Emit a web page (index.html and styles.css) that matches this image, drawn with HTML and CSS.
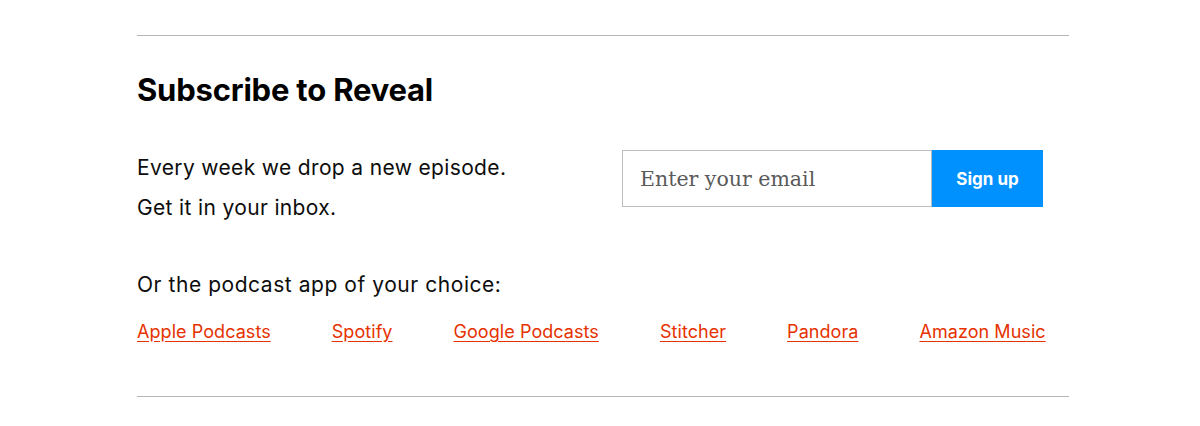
FILE: index.html
```html
<!DOCTYPE html>
<html lang="en">
<head>
  <meta charset="UTF-8">
  <title>Subscribe to Reveal</title>
  <link rel="stylesheet" href="styles.css">
</head>
<body>

  <section class="subscribe">
    <h2 class="subscribe-title">Subscribe to Reveal</h2>

    <div class="subscribe-row">
      <p class="subscribe-text">Every week we drop a new episode.<br>Get it in your inbox.</p>
      <form class="signup" onsubmit="return false">
        <input class="signup-input" type="email" placeholder="Enter your email">
        <button class="signup-btn" type="submit">Sign up</button>
      </form>
    </div>

    <p class="apps-label">Or the podcast app of your choice:</p>
    <div class="apps">
      <a href="#">Apple Podcasts</a>
      <a href="#">Spotify</a>
      <a href="#">Google Podcasts</a>
      <a href="#">Stitcher</a>
      <a href="#">Pandora</a>
      <a href="#">Amazon Music</a>
    </div>
  </section>

</body>
</html>
```

FILE: styles.css
```css
body { margin: 0; background: #fff; font-family: "Inter", "Liberation Sans", sans-serif; color: #0d0d0d; }

.subscribe {
  width: 932px;
  margin: 35px 0 0 137px;
  border-top: 1px solid #b5b5b5;
  border-bottom: 1px solid #b5b5b5;
  height: 362px;
  box-sizing: border-box;
}
.subscribe-title {
  margin: 34px 0 0;
  font-size: 31px;
  line-height: 40px;
  font-weight: 700;
  letter-spacing: -0.2px;
  color: #000;
}

.subscribe-row {
  display: flex;
  margin-top: 40px;
}
.subscribe-text {
  margin: -2px 0 0;
  width: 485px;
  font-size: 21px;
  line-height: 40px;
  letter-spacing: 0.35px;
}

.signup { display: flex; margin: 0; }
.signup-input {
  width: 310px;
  height: 57px;
  box-sizing: border-box;
  border: 1px solid #bdbdbd;
  padding: 0 17px;
  font-family: "DejaVu Serif", "Liberation Serif", serif;
  font-size: 20.5px;
  outline: none;
}
.signup-input::placeholder { color: #5a5a5a; }
.signup-btn {
  width: 111px;
  height: 57px;
  border: none;
  background: #0091ff;
  color: #fff;
  font-family: "Inter", sans-serif;
  font-weight: 700;
  font-size: 17px;
  cursor: pointer;
}

.apps-label {
  margin: 42px 0 0;
  font-size: 21px;
  line-height: 30px;
  letter-spacing: 0.55px;
}
.apps {
  display: flex;
  gap: 61px;
  margin-top: 20px;
}
.apps a {
  color: #e63200;
  font-size: 18px;
  line-height: 24px;
  letter-spacing: 0.06px;
  text-underline-offset: 3px;
}
```
